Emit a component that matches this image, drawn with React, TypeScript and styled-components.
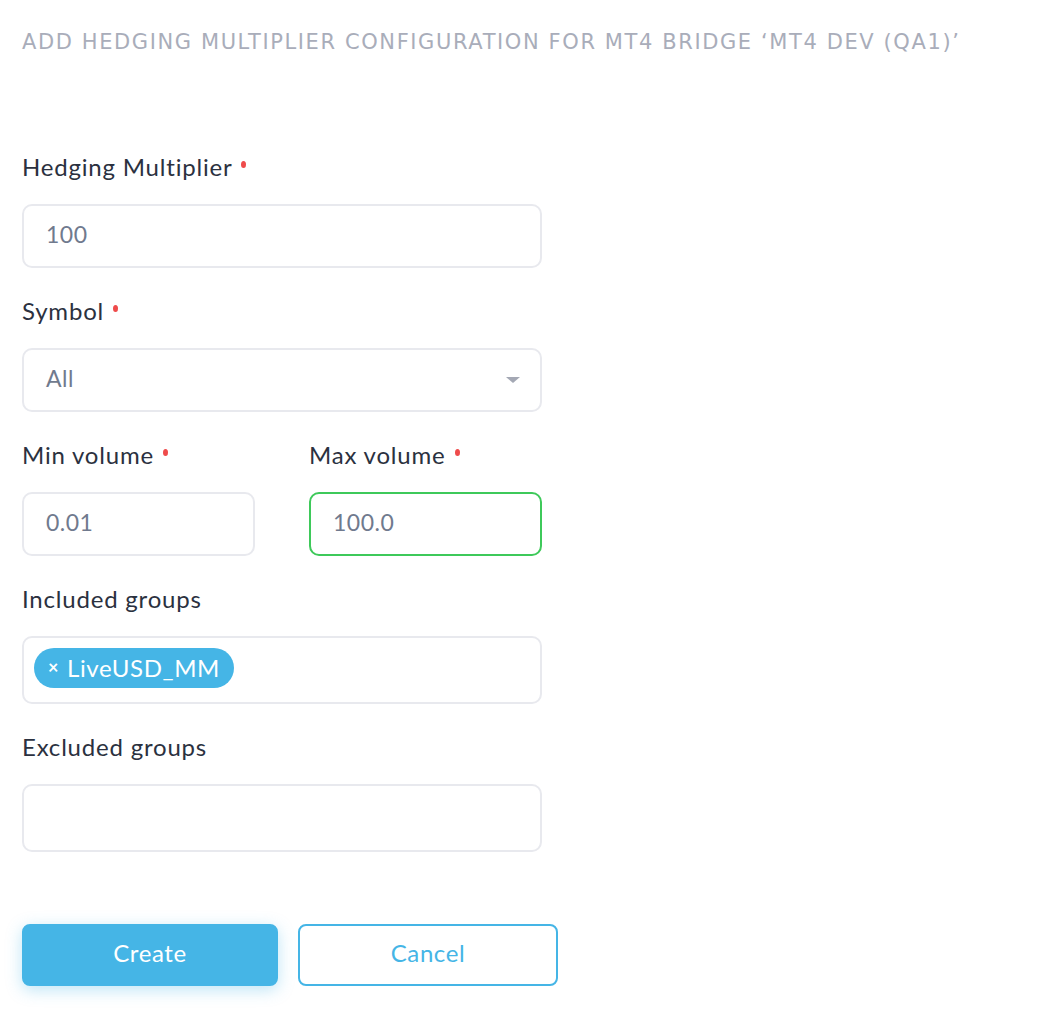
import React from "react";
import styled, { createGlobalStyle } from "styled-components";

const Global = createGlobalStyle`
  html, body { margin: 0; padding: 0; background: #ffffff; }
  body { font-family: "Lato", "Noto Sans", sans-serif; }
  * { box-sizing: border-box; }
`;

const Page = styled.div`
  padding: 28px 22px 24px 22px;
  width: 1040px;
`;

const Title = styled.h1`
  margin: 0;
  font-family: "DejaVu Sans", sans-serif;
  font-weight: 400;
  font-size: 21px;
  letter-spacing: 1.6px;
  color: #a9adba;
  text-transform: uppercase;
  line-height: 28px;
  white-space: nowrap;
`;

const Form = styled.form`
  margin-top: 96px;
  width: 520px;
  display: flex;
  flex-direction: column;
  gap: 28px;
`;

const Field = styled.div`
  display: flex;
  flex-direction: column;
  gap: 22px;
  flex: 1;
`;

const Row = styled.div`
  display: flex;
  gap: 54px;
`;

const Label = styled.label`
  font-size: 24px;
  letter-spacing: 0.8px;
  color: #2b3140;
  line-height: 30px;
  height: 30px;
  display: flex;
  align-items: flex-start;
`;

const Req = styled.span`
  width: 5px;
  height: 7px;
  border-radius: 50%;
  background: #ef4b4b;
  margin-left: 9px;
  margin-top: 9px;
`;

const Box = styled.div<{ $ok?: boolean; $tall?: boolean }>`
  height: ${(p) => (p.$tall ? "68px" : "64px")};
  border: 2px solid ${(p) => (p.$ok ? "#3ec95a" : "#e8e9ee")};
  border-radius: 10px;
  display: flex;
  align-items: center;
  padding: 0 22px 4px 22px;
  font-size: 23px;
  letter-spacing: 0.5px;
  color: #707a8e;
  background: #fff;
`;

const SelectBox = styled(Box)`
  justify-content: space-between;
  padding-right: 20px;
`;

const Caret = styled.span`
  width: 0;
  height: 0;
  margin-top: 4px;
  border-left: 7px solid transparent;
  border-right: 7px solid transparent;
  border-top: 6px solid #a4a8b4;
`;

const TagBox = styled(Box)`
  padding: 0 10px 4px 10px;
`;

const Chip = styled.span`
  background: #45b5e6;
  color: #fff;
  border-radius: 20px;
  height: 40px;
  display: inline-flex;
  align-items: center;
  padding: 0 14px 2px 14px;
  font-size: 24px;
  letter-spacing: 0.6px;
  gap: 8px;
`;

const ChipX = styled.span`
  font-size: 18px;
  font-weight: 700;
`;

const Buttons = styled.div`
  margin-top: 72px;
  display: flex;
  gap: 20px;
`;

const Btn = styled.button<{ $primary?: boolean }>`
  font-family: inherit;
  height: 62px;
  width: ${(p) => (p.$primary ? "256px" : "260px")};
  border-radius: 8px;
  font-size: 24px;
  letter-spacing: 0.6px;
  padding: 0 0 6px 0;
  cursor: pointer;
  border: 2px solid #45b5e6;
  background: ${(p) => (p.$primary ? "#45b5e6" : "#fff")};
  color: ${(p) => (p.$primary ? "#fff" : "#45b5e6")};
  box-shadow: ${(p) => (p.$primary ? "0 4px 16px rgba(69,181,230,0.35)" : "none")};
`;

export default function App() {
  return (
    <Page>
      <Global />
      <Title>Add hedging multiplier configuration for MT4 bridge ‘MT4 DEV (QA1)’</Title>
      <Form onSubmit={(e) => e.preventDefault()}>
        <Field>
          <Label>Hedging Multiplier<Req /></Label>
          <Box>100</Box>
        </Field>
        <Field>
          <Label>Symbol<Req /></Label>
          <SelectBox>All<Caret /></SelectBox>
        </Field>
        <Row>
          <Field>
            <Label>Min volume<Req /></Label>
            <Box>0.01</Box>
          </Field>
          <Field>
            <Label>Max volume<Req /></Label>
            <Box $ok>100.0</Box>
          </Field>
        </Row>
        <Field>
          <Label>Included groups</Label>
          <TagBox $tall>
            <Chip><ChipX>×</ChipX>LiveUSD_MM</Chip>
          </TagBox>
        </Field>
        <Field>
          <Label>Excluded groups</Label>
          <Box $tall />
        </Field>
      </Form>
      <Buttons>
        <Btn $primary>Create</Btn>
        <Btn>Cancel</Btn>
      </Buttons>
    </Page>
  );
}
